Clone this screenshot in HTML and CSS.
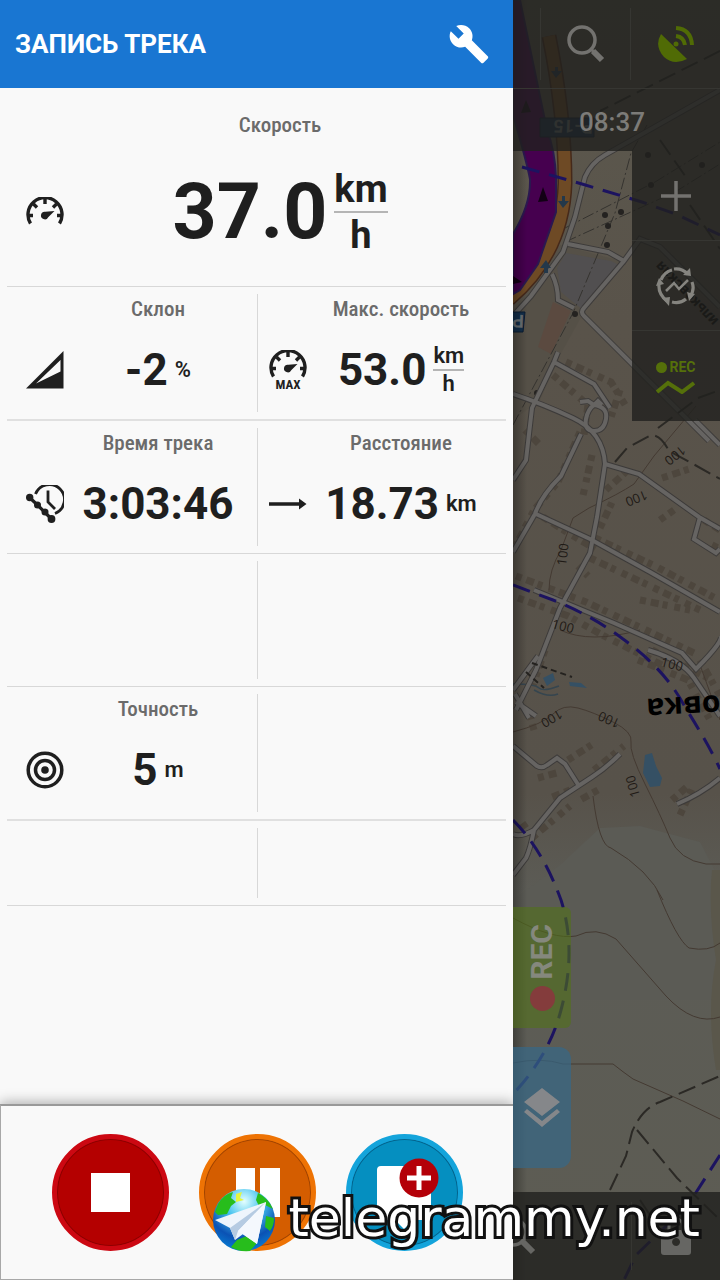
FILE: index.html
```html
<!DOCTYPE html>
<html lang="ru">
<head>
    <meta charset="utf-8">
    <meta name="viewport" content="width=device-width, initial-scale=1">
    <title>Запись трека</title>
    <link rel="stylesheet" href="styles.css">
</head>
<body>
    <svg class="defs" aria-hidden="true">
        <symbol id="gauge" viewBox="0 0 38 28">
            <path d="M4.5 26.5A17 17 0 1 1 33.5 26.5" fill="none" stroke="currentColor" stroke-width="3.4"/>
            <path d="M2 18.500h5M31 18.500h5M19 2v5M7.500 7l3.500 3.500M30.500 7l-3.500 3.500" stroke="currentColor" stroke-width="3.400"/>
            <path d="M28.500 14l-6.300 6.200a3.800 3.800 0 1 1-2.800-5.400z" fill="currentColor"/>
        </symbol>
    </svg>

    <div class="screen">
        <div class="drawer">
            <header class="drawer-head">
                <h1>ЗАПИСЬ ТРЕКА</h1>
                <button class="icon-btn" aria-label="Настройки">
                    <svg width="42" height="42" viewBox="0 0 24 24"><path fill="#fff" d="M22.700 19l-9.100-9.100c.9-2.300.4-5-1.500-6.900-2-2-5-2.400-7.400-1.300L9 6 6 9 1.600 4.700C.4 7.100.9 10.100 2.900 12.100c1.900 1.900 4.600 2.400 6.900 1.500l9.100 9.100c.4.4 1 .4 1.400 0l2.300-2.300c.5-.4.5-1.100.1-1.400z"/></svg>
                </button>
            </header>

            <main class="stats">
                <div class="row row-main">
                    <section class="cell cell-full">
                        <h2 class="label">Скорость</h2>
                        <svg class="icon" width="38" height="28"><use href="#gauge"/></svg>
                        <div class="value"><b>37.0</b><span class="frac"><span>km</span><span>h</span></span></div>
                    </section>
                </div>
                <div class="row row-thick">
                    <section class="cell">
                        <h2 class="label">Склон</h2>
                        <svg class="icon" width="38" height="38" viewBox="0 0 38 38"><path fill="currentColor" fill-rule="evenodd" d="M0 37.500L37.500 0V37.500zM10 32.500L34.500 20.500V9z"/></svg>
                        <div class="value"><b>-2</b><span class="unit">%</span></div>
                    </section>
                    <section class="cell">
                        <h2 class="label">Макс. скорость</h2>
                        <svg class="icon" width="38" height="40" viewBox="0 0 38 40"><use href="#gauge" width="38" height="28"/><text class="max" x="19" y="39">MAX</text></svg>
                        <div class="value"><b>53.0</b><span class="frac"><span>km</span><span>h</span></span></div>
                    </section>
                </div>
                <div class="row">
                    <section class="cell">
                        <h2 class="label">Время трека</h2>
                        <svg class="icon" width="38" height="38" viewBox="0 0 38 38">
                            <path d="M9.500 9A15 15 0 1 1 29 28.500M22 5.500V17l7 7" fill="none" stroke="currentColor" stroke-width="2.800"/>
                            <path d="M3.500 12.500L11.500 20 19 27.500 25.500 34" fill="none" stroke="currentColor" stroke-width="3.200"/>
                            <g fill="currentColor"><circle cx="3.700" cy="12.500" r="3.700"/><circle cx="11.500" cy="20" r="3.500"/><circle cx="19" cy="27" r="3.500"/><circle cx="25.500" cy="34" r="3.900"/></g>
                        </svg>
                        <div class="value"><b>3:03:46</b></div>
                    </section>
                    <section class="cell">
                        <h2 class="label">Расстояние</h2>
                        <svg class="icon" width="38" height="12" viewBox="0 0 38 12"><path fill="currentColor" d="M0 4.300h30V.5l7.500 5.500-7.500 5.500V7.700H0z"/></svg>
                        <div class="value"><b>18.73</b><span class="unit">km</span></div>
                    </section>
                </div>
                <div class="row">
                    <section class="cell"></section>
                    <section class="cell"></section>
                </div>
                <div class="row row-thick">
                    <section class="cell">
                        <h2 class="label">Точность</h2>
                        <svg class="icon" width="38" height="38" viewBox="0 0 38 38"><g fill="none" stroke="currentColor" stroke-width="3.500"><circle cx="19" cy="19" r="16.800"/><circle cx="19" cy="19" r="9.500"/></g><circle cx="19" cy="19" r="3.800" fill="currentColor"/></svg>
                        <div class="value"><b>5</b><span class="unit">m</span></div>
                    </section>
                    <section class="cell"></section>
                </div>
                <div class="row row-low">
                    <section class="cell"></section>
                    <section class="cell"></section>
                </div>
            </main>

            <footer class="controls">
                <button class="round stop" aria-label="Стоп">
                    <svg width="107" height="107" viewBox="0 0 107 107"><path fill="#fff" d="M34 34h39v39H34z"/></svg>
                </button>
                <button class="round pause" aria-label="Пауза">
                    <svg width="107" height="107" viewBox="0 0 107 107"><path fill="#fff" d="M32 29h19v49H32zM56 29h20v49H56z"/></svg>
                </button>
                <button class="round point" aria-label="Добавить точку">
                    <svg width="107" height="107" viewBox="0 0 107 107">
                        <path fill="#fff" d="M30 27h46a4 4 0 0 1 4 4v46a4 4 0 0 1-4 4H62l-9 9-9-9H30a4 4 0 0 1-4-4V31a4 4 0 0 1 4-4z"/>
                        <circle cx="68" cy="39" r="19.500" fill="#b40008"/>
                        <path d="M56 39h24M68 27v24" stroke="#fff" stroke-width="5"/>
                    </svg>
                </button>
            </footer>
        </div>

        <div class="map">
            <svg class="map-canvas" viewBox="513 0 207 1280" preserveAspectRatio="xMinYMin slice" aria-hidden="true">
                <defs>
                    <linearGradient id="land" x1="0" y1="0" x2="0" y2="1">
                        <stop offset="0" stop-color="#5c594e"/><stop offset=".25" stop-color="#59534a"/>
                        <stop offset=".62" stop-color="#57524a"/><stop offset=".7" stop-color="#5c5c56"/>
                        <stop offset="1" stop-color="#5d5c53"/>
                    </linearGradient>
                    <linearGradient id="edge"><stop offset="0" stop-opacity=".3"/><stop offset="1" stop-opacity="0"/></linearGradient>
                </defs>
                <path fill="url(#land)" d="M513 0h207v1280H513z"/>
                <path fill="#555047" d="M513 310L560 245 625 262 585 310 560 355 540 400 513 420z"/>
                <path fill="#514f50" d="M566 253l45 8 12 6-40 43-10-8-12-10-4-24z"/>
                <path fill="#5b4a40" d="M553 302l18 9-20 43-13-7z"/>
                <path fill="#5b5b55" d="M513 900L560 865 600 828 640 826 700 842 720 880V1000H513z"/>
                <path fill="#5a574b" d="M712 870h8v200h-4q-10-60 0-110-8-50-4-90z"/>

                <!-- houses -->
                <g class="houses">
                    <path d="M566 362l45 20 16 26M553 375l35 30-4 30M620 390l-10 30"/>
                    <path d="M580 432l-22 50-24 28-18 35M592 455l-10 45M525 430l14 14"/>
                    <path d="M543 517l22 14 30 18M600 528l14-30M606 490l22-20M662 478l30-10"/>
                    <path d="M595 538l60 28 60 32M590 558l60 28 50 24M578 566l10 10M660 520l14-10"/>
                    <path d="M516 576l70 26 60 28 50 24M518 598l50 18 36 20 60 30M545 650l-12 35"/>
                    <path d="M638 660l50 20 22 40M652 650l60 30M640 600l50 10M700 660l20 36"/>
                    <path d="M568 760l28-18M594 770l30-24M538 778l22-6M570 790l-20 8M532 838l38-32M598 790l-18 10"/>
                    <path d="M672 800l16-14M680 815l14-30M526 828l-6-8M534 730l-6-20M704 520l16 10M712 545l8 4"/>
                </g>

                <!-- water -->
                <g fill="#355064">
                    <path d="M645 755l7-2 4 13 6 12-2 8-10 1-7-14z"/>
                    <path d="M543 678l10-5 2 7-8 6zM569 682l12 1 6 5-17-2z"/>
                </g>
                <path d="M513 684q22 0 26 4t20-2M534 690q14 8 24 4" fill="none" stroke="#35454f" stroke-width="1.500"/>

                <!-- contours -->
                <g class="contour">
                    <path d="M513 732q30-8 40-18t25-6 35 14 18 20 14 42 25 54 36 26h14"/>
                    <path d="M593 796q6 50 18 52 38 22 52 52"/>
                    <path d="M513 918q40 22 63 18 20-10 40 3l50 57q28 30 54 21"/>
                    <path d="M657 890q20 50 32 58 20 4 31-5"/>
                    <path d="M513 1063q28-6 50 1h50q10 8 20 15l50 22 37 18"/>
                    <path d="M549 590q0-20 12-40l12-32 16-10q30-14 45-24l20-28 42-50"/>
                    <path d="M560 630q30 14 80 0M700 665l20 55"/>
                </g>

                <!-- power lines -->
                <g class="power">
                    <path d="M513 425l60-112 42-100 16-60 16-28M565 242l110-50 45-28M565 228l90-46 65-40"/>
                </g>
                <g fill="#242220"><circle cx="575" cy="314" r="3"/><circle cx="607" cy="245" r="3"/><circle cx="608" cy="226" r="3"/><circle cx="605" cy="215" r="3"/><circle cx="621" cy="212" r="3"/><circle cx="651" cy="185" r="3"/><circle cx="702" cy="165" r="3"/><circle cx="648" cy="155" r="3"/><circle cx="537" cy="393" r="3"/></g>

                <!-- streets -->
                <g class="street-edge">
                    <g id="streets">
                        <path d="M568 244l40 8 16 9 16-22 20 8 60 60M624 261l-40 47q-4 4 0 8l125 125M720 90L605 155q-14 8-20 22l-10 40-12 35-32 44-18 20M552 274q6 12 6 26l16 8"/>
                        <path d="M513 394q30 10 60 24t32 46l-8 53-7 36-30 55-24 62-20 40M558 352l-4 10-22 46-6 52-13 20M554 362l40 22 16 24"/>
                        <path d="M581 434l-20 42q-20 20-26 38l-22 38M536 514l54 25 60 33 70 40M605 464l34 10 60 43 21 12M700 517l-6 22 22 14 4-4M695 420l25 25"/>
                        <path d="M534 590l80 33 68 30 14 16q30-30 24-34M648 650q34 10 46 28l26 38"/>
                        <path d="M513 690l25-34M515 694l14 24M516 702l20 14M513 746l24 20q5 3 10-1l10-7 8 6 14 22M620 754q-14 14-28 23l-32 21-26 32q-14 8-21 4M534 830q-4 20-8 28l-13 17M677 804q24-10 43-26"/>
                        <path d="M580 402l8-1 6 4 4-4 4 4M594 405q14 2 12 14t-12 12-8-12q2-10 8-14"/>
                    </g>
                </g>
                <use href="#streets" class="street-fill"/>

                <!-- tracks -->
                <g class="track">
                    <path d="M610 1190l16-34 6-24q10-24 28-30l60-26M637 1130l40 48 43 42M640 1200l20 30"/>
                    <path d="M615 462l12-14 24-13q10 0 18 16l26 14 25 14M720 51l-120 60M660 140l28 40M690 205l30 44M658 428l40-30 22-8"/>
                </g>
                <path d="M532 663l40 14M526 672l18 16" stroke="#24221f" stroke-width="2" stroke-dasharray="6 4"/>

                <!-- highway and route -->
                <g fill="none">
                    <path d="M549 36q16 80 16 147-2 70-56 116" stroke="#45291a" stroke-width="15"/>
                    <path d="M549 36q16 80 16 147-2 70-56 116" stroke="#6e4a25" stroke-width="12"/>
                </g>
                <path d="M513 0h7l27 130q8 20 9 48v34l-18 52-18 26-7 4v-60q18-30 17-55-4-20-17-64z" fill="#46004f" stroke="#2b1850" stroke-width="2"/>
                <g fill="#120015"><path d="M543 187l5 14-10 1zM526 100l5 12-10 1zM513 276l9 6-9 2z"/></g>
                <g fill="#23384a"><path d="M546 260l-6 8h4v5h4v-5h3zM563 208l-5-7h4v-5h3v5h4zM556 78l-5-7h4v-4h3v4h4z"/></g>

                <g class="shield"><path d="M540 118h54v19h-54zM500 312h25l-2 20h-20z"/></g>
                <text class="shield-text" transform="translate(593 121) rotate(182)">Р-15</text>
                <text class="shield-text" transform="translate(524 315) rotate(182)">Р</text>

                <path class="border" d="M522 167l60 17 60 18 36 13 42 20"/>
                <path class="border" d="M513 585l40 15q40 16 70 39 42 30 62 68 24 38 35 62"/>
                <path class="border" d="M513 820q30 30 48 80 16 50 0 110-12 46-48 84M720 1155l-32 50-52 50-12 25"/>

                <g class="height">
                    <text transform="translate(681 445) rotate(142)">100</text>
                    <text transform="translate(645 490) rotate(158)">100</text>
                    <text transform="translate(566 566) rotate(-83)">100</text>
                    <text transform="translate(551 628) rotate(14)">100</text>
                    <text transform="translate(660 666) rotate(14)">100</text>
                    <text transform="translate(559 709) rotate(150)">100</text>
                    <text transform="translate(621 720) rotate(204)">100</text>
                    <text transform="translate(640 796) rotate(-105)">100</text>
                </g>
                <text class="town" transform="translate(720 695) rotate(177)">овка</text>
                <text class="street-name" transform="translate(719 320) rotate(226)">ильковская</text>
                <path fill="url(#edge)" d="M513 0h14v1280h-14z"/>
            </svg>

            <div class="map-top">
                <div class="map-top-buttons">
                    <button class="top-btn" aria-label="Поиск">
                        <svg width="40" height="40" viewBox="0 0 40 40"><circle cx="16" cy="16" r="13" fill="none" stroke="#73726f" stroke-width="3.500"/><path d="M25 25l3 3" stroke="#73726f" stroke-width="3"/><path d="M27 27l9 9" stroke="#73726f" stroke-width="6"/></svg>
                    </button>
                    <button class="top-btn" aria-label="GPS">
                        <svg width="40" height="40" viewBox="0 0 40 40"><path fill="#506b05" d="M5 10L31 35Q18 42 8 33-2 22 5 10z"/><circle cx="20" cy="20" r="2.500" fill="#506b05"/><path d="M20 12q8 1 9 9M20 4q15 1 16 17" fill="none" stroke="#506b05" stroke-width="4"/></svg>
                    </button>
                </div>
                <time class="clock">08:37</time>
            </div>

            <div class="map-side">
                <button class="side-btn" aria-label="Приблизить"><svg width="40" height="40" viewBox="0 0 40 40"><path d="M5 20h30M20 5v30" stroke="#73726f" stroke-width="3.500"/></svg></button>
                <button class="side-btn" aria-label="Обновить">
                    <svg width="40" height="40" viewBox="0 0 40 40">
                        <g fill="none" stroke="#85847f" stroke-width="3.200"><path d="M5 14Q8 6 16 4M18 3q8-1 14 5M36 16q3 8-2 14M30 33q-6 5-14 3M11 35Q2 28 3 18"/><path d="M10 25l8-8 5 6 9-9" stroke-width="2.500"/></g>
                        <path fill="#85847f" d="M27 9l8 1-1-8zM31 26l2 9 6-7zM6 32l8-1-1 9zM0 20l8-2-5-6z"/>
                    </svg>
                </button>
                <button class="side-btn rec-btn"><span class="rec-label"><i></i>REC</span>
                    <svg width="42" height="14" viewBox="0 0 42 14"><path d="M2 12l11-9 14 9 12-9" fill="none" stroke="#55700a" stroke-width="4"/></svg>
                </button>
            </div>

            <div class="tabs">
                <button class="tab tab-rec"><span>REC</span><i></i></button>
                <button class="tab tab-layers" aria-label="Слои">
                    <svg width="38" height="40" viewBox="0 0 38 40"><path fill="#85878a" d="M19 0l18 14-18 14L1 14zM1 24l3-3 15 12 15-12 3 3-18 15z"/></svg>
                </button>
            </div>

            <div class="map-bottom">
                <button class="bottom-btn find" aria-label="Масштаб"><svg width="40" height="40" viewBox="0 0 40 40"><circle cx="16" cy="16" r="13" fill="none" stroke="#666663" stroke-width="3.500"/><path d="M26 26l10 10" stroke="#666663" stroke-width="6"/></svg></button>
                <button class="bottom-btn lock" aria-label="Блокировка"><svg width="30" height="40" viewBox="0 0 30 40"><path d="M8 16v-6a7 7 0 0 1 14 0v6" fill="none" stroke="#666663" stroke-width="3"/><path fill="#666663" fill-rule="evenodd" d="M3 14h24q3 0 3 3v19q0 3-3 3H3q-3 0-3-3V17q0-3 3-3zM15 22a4 4 0 1 0 .1 0z"/></svg></button>
            </div>
        </div>

        <div class="mark">
            <svg width="64" height="64" viewBox="0 0 64 64" aria-hidden="true">
                <defs><radialGradient id="sea" cx=".5" cy=".2" r=".85"><stop offset="0" stop-color="#e4ffff"/><stop offset=".35" stop-color="#45c3ef"/><stop offset=".7" stop-color="#0b52b4"/><stop offset="1" stop-color="#0784d8"/></radialGradient></defs>
                <circle cx="32" cy="32" r="31" fill="url(#sea)"/>
                <path fill="#27bd1c" d="M6 16Q12 6 21 4l-2 6 5 4-5 4-4 8-9 1-3-3zM46 5q10 5 15 16l-8-4-6 1-3-6zM25 52l12-5 8 8-7 8q-12 1-19-4zM54 28l8 2q0 8-4 13l-5-4z"/>
                <path fill="#e6f63e" d="M24 6l6-2-2 6 4 2-8 2z"/>
                <path fill="#eef5fc" d="M3 32L54 14 45 56 31 46 23 52 18 40z"/>
                <path fill="#b5cbe2" d="M18 40L54 14 26 43 23 52z"/>
                <path fill="#f4f8fd" d="M26 43L54 14 45 56z"/>
            </svg>
            <span>telegrammy.net</span>
        </div>
    </div>
</body>
</html>
```
FILE: styles.css
```css
* {
    box-sizing: border-box;
}

body {
    margin: 0;
    font-family: Roboto, "Liberation Sans", sans-serif;
    color: #1f1f1f;
    background-color: #57534a;
}

button {
    display: flex;
    align-items: center;
    justify-content: center;
    padding: 0;
    border: 0;
    background: none;
    font-family: inherit;
    cursor: pointer;
}

.defs {
    position: absolute;
    width: 0;
    height: 0;
}

.screen {
    position: relative;
    display: flex;
    min-height: 100vh;
    overflow: hidden;
}

/* drawer */
.drawer {
    display: flex;
    flex-direction: column;
    flex: 0 0 71.25%;
    background-color: #f9f9f9;
}

.drawer-head {
    display: flex;
    align-items: center;
    justify-content: space-between;
    height: 88px;
    padding: 0 23px 0 15px;
    background-color: #1976d2;
    color: #fff;
}

.drawer-head h1 {
    margin: 0;
    font-size: 26px;
    line-height: 32px;
    font-weight: 700;
}

.stats {
    flex: 1;
    padding: 0 7px;
}

.row {
    display: flex;
    height: 133px;
    padding: 7px 0;
    border-bottom: 1px solid #d8d8d8;
}

.row-main {
    height: 199px;
    padding-bottom: 19px;
}

.row-thick {
    height: 134px;
    border-bottom: 2px solid #e0e0e0;
}

.row-low {
    height: 85px;
}

.cell {
    flex: 1;
    display: grid;
    grid-template-columns: 38px 1fr;
    grid-template-rows: 30px 1fr;
    align-items: center;
    padding: 0 5px 0 19px;
    border-right: 1px solid #d8d8d8;
}

.cell:last-child {
    padding: 0 11px;
    border-right: 0;
}

.cell-full:last-child {
    grid-template-rows: 60px 1fr;
    padding: 0 10px 0 19px;
}

.label {
    grid-column: 2;
    margin: 0;
    text-align: center;
    font-family: "Roboto Condensed", Roboto, sans-serif;
    font-size: 21px;
    line-height: 30px;
    font-weight: 500;
    color: #6b6b6b;
    white-space: nowrap;
}

.icon {
    display: block;
}

.cell .icon {
    margin-top: 3px;
}

.cell-full .icon {
    margin-top: 0;
}

.max {
    font-family: "Roboto Condensed", Roboto, sans-serif;
    font-size: 13px;
    font-weight: 700;
    text-anchor: middle;
    fill: currentColor;
}

.value {
    display: flex;
    align-items: center;
    justify-content: center;
    gap: 7px;
    padding-top: 4px;
    font-size: 44px;
    line-height: 52px;
}

.value b {
    font-weight: 700;
}

.unit {
    font-size: 22px;
    font-weight: 600;
}

.frac {
    display: flex;
    flex-direction: column;
    font-size: 22px;
    line-height: 26px;
    font-weight: 600;
    text-align: center;
}

.frac span + span {
    border-top: 2px solid #b5b5b5;
}

.row-main .value {
    padding-top: 2px;
    font-size: 77px;
    line-height: 92px;
}

.row-main .frac {
    font-size: 38px;
    line-height: 44px;
    font-weight: 700;
}

.controls {
    position: relative;
    display: flex;
    align-items: center;
    justify-content: center;
    gap: 30px;
    height: 176px;
    border: 1px solid #a8a8a8;
    border-top: 2px solid #999;
    border-right: 0;
    box-shadow: 0 -2px 12px rgba(0, 0, 0, 0.3);
    background-color: #f9f9f9;
}

.round {
    width: 117px;
    height: 117px;
    border: 5px solid;
    border-radius: 50%;
}

.round svg {
    border-radius: 50%;
    flex: none;
}

.stop {
    border-color: #cc0812;
    background-color: #b40000;
    box-shadow: inset 0 0 0 1px #8c0000;
}

.pause {
    border-color: #ee7304;
    background-color: #d45d00;
    box-shadow: inset 0 0 0 1px #a04400;
}

.point {
    border-color: #14a4db;
    background-color: #058fc0;
    box-shadow: inset 0 0 0 1px #04638c;
}

/* map */
.map {
    position: relative;
    display: flex;
    flex-direction: column;
    flex: 1;
    min-width: 0;
    overflow: hidden;
}

.map-canvas {
    position: absolute;
    top: 0;
    left: 0;
    width: 100%;
    height: 100%;
}

.houses {
    fill: none;
    stroke: #4d463d;
    stroke-width: 7px;
    stroke-dasharray: 6 5 8 4 5 7;
}

.contour {
    fill: none;
    stroke: #443a32;
    stroke-width: 1px;
}

.power {
    fill: none;
    stroke: #35332f;
    stroke-width: 1px;
    stroke-dasharray: 12 3 2 3;
}

.street-edge {
    fill: none;
    stroke: #3d3b3a;
    stroke-width: 6px;
}

.street-fill {
    fill: none;
    stroke: #666462;
    stroke-width: 4px;
}

.track {
    fill: none;
    stroke: #2b2925;
    stroke-width: 2px;
    stroke-dasharray: 18 7;
}

.border {
    fill: none;
    stroke: #1c1360;
    stroke-width: 3px;
    stroke-dasharray: 18 10;
}

.shield {
    fill: #14304c;
    stroke: #0b1c33;
    stroke-width: 1px;
}

.shield-text {
    font-size: 18px;
    font-weight: 700;
    fill: #6c7276;
}

.height {
    font-family: "Open Sans", sans-serif;
    font-size: 13px;
    fill: #1f1a16;
}

.town {
    font-family: "Open Sans", sans-serif;
    font-size: 30px;
    font-weight: 700;
    fill: #000;
}

.street-name {
    font-size: 15px;
    font-weight: 700;
    fill: #000;
}

.map-top,
.map-side,
.map-bottom {
    position: relative;
    background-color: rgba(32, 32, 30, 0.8);
}

.map-top-buttons {
    display: flex;
    justify-content: flex-end;
    height: 89px;
    padding: 8px 0;
    border-bottom: 1px solid #363632;
}

.top-btn {
    width: 90px;
    border-left: 1px solid #363632;
}

.clock {
    display: block;
    height: 62px;
    padding-right: 9px;
    text-align: center;
    font-size: 26px;
    line-height: 66px;
    font-weight: 500;
    color: #7c7b78;
}

.map-side {
    align-self: flex-end;
    width: 88px;
}

.side-btn {
    width: 100%;
    height: 90px;
    border-bottom: 1px solid #363632;
}

.rec-btn {
    flex-direction: column;
    gap: 4px;
    border-bottom: 0;
}

.rec-label {
    display: flex;
    align-items: center;
    gap: 2px;
    font-size: 14px;
    line-height: 18px;
    font-weight: 700;
    color: #55700a;
}

.rec-label i {
    width: 11px;
    height: 11px;
    border-radius: 50%;
    background-color: #55700a;
}

.tabs {
    position: relative;
    display: flex;
    flex-direction: column;
    gap: 19px;
    width: 58px;
    margin-top: auto;
    margin-bottom: 24px;
}

.tab {
    height: 121px;
    border-radius: 0 12px 12px 0;
}

.tab-rec {
    flex-direction: column;
    gap: 6px;
    border-radius: 0 6px 6px 0;
    background-color: rgba(81, 113, 25, 0.6);
}

.tab-rec span {
    writing-mode: vertical-rl;
    transform: rotate(180deg);
    font-size: 30px;
    line-height: 34px;
    font-weight: 700;
    color: #85887d;
}

.tab-rec i {
    width: 25px;
    height: 25px;
    border-radius: 50%;
    background-color: #843c3c;
}

.tab-layers {
    background-color: rgba(54, 104, 136, 0.7);
}

.map-bottom {
    display: flex;
    height: 88px;
}

.find {
    flex: 1;
    justify-content: flex-start;
    margin: 10px 0;
    border-right: 1px solid #363632;
}

.find svg {
    margin-left: -16px;
}

.lock {
    width: 88px;
}

/* site mark */
.mark {
    position: absolute;
    right: 20px;
    bottom: 28px;
    display: flex;
    align-items: center;
    gap: 12px;
    font-family: "DejaVu Sans", sans-serif;
    font-size: 52px;
    line-height: 60px;
    color: #fff;
    -webkit-text-stroke: 6px #111;
    paint-order: stroke fill;
}

.mark span {
    padding-bottom: 4px;
}
```
